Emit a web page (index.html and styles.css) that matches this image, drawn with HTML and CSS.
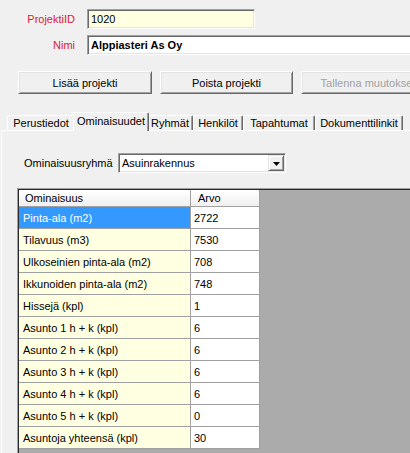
FILE: index.html
```html
<!DOCTYPE html>
<html lang="fi">
<head>
<meta charset="utf-8">
<title>Projekti</title>
<link rel="stylesheet" href="styles.css">
</head>
<body>
<div class="header">
  <div class="field">
    <span class="label">ProjektiID</span>
    <div class="textbox id">1020</div>
  </div>
  <div class="field">
    <span class="label">Nimi</span>
    <div class="textbox name">Alppiasteri As Oy</div>
  </div>
</div>
<div class="buttons">
  <div class="btn">Lisää projekti</div>
  <div class="btn">Poista projekti</div>
  <div class="btn disabled">Tallenna muutokset</div>
</div>
<div class="tabs">
  <div class="tabstrip">
    <div class="tab">Perustiedot</div>
    <div class="tab active">Ominaisuudet</div>
    <div class="tab">Ryhmät</div>
    <div class="tab">Henkilöt</div>
    <div class="tab">Tapahtumat</div>
    <div class="tab">Dokumenttilinkit</div>
  </div>
  <div class="panel">
    <div class="combo-row">
      <span class="combo-label">Ominaisuusryhmä</span>
      <div class="combo">
        <span class="combo-text">Asuinrakennus</span>
        <div class="combo-btn">
          <svg width="7" height="4" viewBox="0 0 7 4"><polygon points="0,0 7,0 3.5,4" fill="#000"/></svg>
        </div>
      </div>
    </div>
    <div class="grid">
      <div class="grid-in">
        <div class="dg">
          <div class="c h">Ominaisuus</div><div class="c h">Arvo</div>
          <div class="c k sel">Pinta-ala (m2)</div><div class="c v">2722</div>
          <div class="c k">Tilavuus (m3)</div><div class="c v">7530</div>
          <div class="c k">Ulkoseinien pinta-ala (m2)</div><div class="c v">708</div>
          <div class="c k">Ikkunoiden pinta-ala (m2)</div><div class="c v">748</div>
          <div class="c k">Hissejä (kpl)</div><div class="c v">1</div>
          <div class="c k">Asunto 1 h + k (kpl)</div><div class="c v">6</div>
          <div class="c k">Asunto 2 h + k (kpl)</div><div class="c v">6</div>
          <div class="c k">Asunto 3 h + k (kpl)</div><div class="c v">6</div>
          <div class="c k">Asunto 4 h + k (kpl)</div><div class="c v">6</div>
          <div class="c k">Asunto 5 h + k (kpl)</div><div class="c v">0</div>
          <div class="c k">Asuntoja yhteensä (kpl)</div><div class="c v">30</div>
        </div>
      </div>
    </div>
  </div>
</div>
</body>
</html>
```
FILE: styles.css
```css
* { box-sizing: border-box; }
html, body { margin: 0; padding: 0; }
body {
  width: 410px;
  height: 453px;
  overflow: hidden;
  background: #f0f0f0;
  font-family: "Liberation Sans", Arial, sans-serif;
  font-size: 11px;
  color: #000;
}

.header { padding-top: 9px; }
.field { display: flex; align-items: center; height: 20px; }
.field + .field { margin-top: 6px; }
.label {
  width: 80px;
  flex: none;
  text-align: right;
  padding-right: 5px;
  margin-right: 7px;
  color: #dc2035;
}
.textbox {
  height: 20px;
  flex: none;
  display: flex;
  align-items: center;
  padding: 0 3px;
  border: 1px solid;
  border-color: #a0a0a0 #ffffff #ffffff #a0a0a0;
  box-shadow: inset 1px 1px 0 #696969, inset -1px -1px 0 #e3e3e3;
  white-space: nowrap;
}
.id { width: 168px; background: #ffffe1; }
.name { width: 340px; background: #fff; font-weight: bold; }

.buttons {
  display: flex;
  gap: 8px;
  margin-top: 16px;
  padding-left: 18px;
}
.btn {
  flex: none;
  width: 134px;
  height: 23px;
  display: flex;
  align-items: center;
  justify-content: center;
  background: #f0f0f0;
  border: 1px solid;
  border-color: #ffffff #696969 #696969 #ffffff;
  box-shadow: inset 1px 1px 0 #e3e3e3, inset -1px -1px 0 #a0a0a0;
  white-space: nowrap;
}
.btn:nth-child(2) { width: 133px; }
.btn.disabled { color: #a0a0a0; }

.tabs { margin-top: 18px; }
.tabstrip {
  display: flex;
  align-items: flex-end;
  height: 18px;
  padding-left: 7px;
}
.tab {
  flex: none;
  height: 15px;
  display: flex;
  align-items: center;
  justify-content: center;
  background: #f0f0f0;
  border-top: 1px solid #ffffff;
  border-left: 1px solid #ffffff;
  border-right: 1px solid #696969;
  box-shadow: inset -1px 0 0 #a0a0a0;
  border-radius: 2px 2px 0 0;
  white-space: nowrap;
}
.tab:nth-child(1) { width: 68px; }
.tab:nth-child(2) { width: 72px; }
.tab:nth-child(3) { width: 46px; }
.tab:nth-child(4) { width: 50px; }
.tab:nth-child(5) { width: 72px; }
.tab:nth-child(6) { width: 88px; }
.tab.active {
  width: 76px;
  height: 19px;
  margin: 0 -2px -1px;
  position: relative;
  z-index: 1;
  padding-bottom: 2px;
}

.panel {
  margin-left: 1px;
  border-top: 1px solid #ffffff;
  border-left: 1px solid #ffffff;
  padding: 22px 0 0 15px;
}
.combo-row {
  display: flex;
  align-items: center;
  padding-left: 7px;
}
.combo-label { width: 94px; flex: none; }
.combo {
  width: 168px;
  height: 20px;
  flex: none;
  display: flex;
  align-items: stretch;
  background: #fff;
  border: 1px solid;
  border-color: #a0a0a0 #ffffff #ffffff #a0a0a0;
  box-shadow: inset 1px 1px 0 #696969, inset -1px -1px 0 #e3e3e3;
  padding: 1px 1px 1px 3px;
}
.combo-text { flex: 1; display: flex; align-items: center; }
.combo-btn {
  width: 16px;
  flex: none;
  display: flex;
  align-items: center;
  justify-content: center;
  background: #f0f0f0;
  border: 1px solid;
  border-color: #e3e3e3 #696969 #696969 #e3e3e3;
  box-shadow: inset 1px 1px 0 #ffffff, inset -1px -1px 0 #a0a0a0;
  padding-top: 1px;
}
.combo-btn svg { display: block; }

.grid {
  margin-top: 15px;
  height: 280px;
  border-top: 1px solid #a0a0a0;
  border-left: 1px solid #a0a0a0;
  background: #ababab;
}
.grid-in {
  height: 100%;
  border-top: 1px solid #2a2a2a;
  border-left: 1px solid #2a2a2a;
}
.dg {
  display: grid;
  grid-template-columns: 172px 69px;
  grid-template-rows: 17px;
  grid-auto-rows: 22px;
}
.c {
  display: flex;
  align-items: center;
  border-right: 1px solid #a0a0a0;
  border-bottom: 1px solid #a0a0a0;
  white-space: nowrap;
  overflow: hidden;
}
.h {
  background: linear-gradient(#ffffff, #f0f0f0);
  padding-left: 6px;
}
.h:nth-child(2) { padding-left: 7px; }
.k { background: #ffffe1; padding-left: 4px; }
.v { background: #ffffff; padding-left: 3px; }
.k.sel { background: #3399ff; color: #ffffff; }
```
